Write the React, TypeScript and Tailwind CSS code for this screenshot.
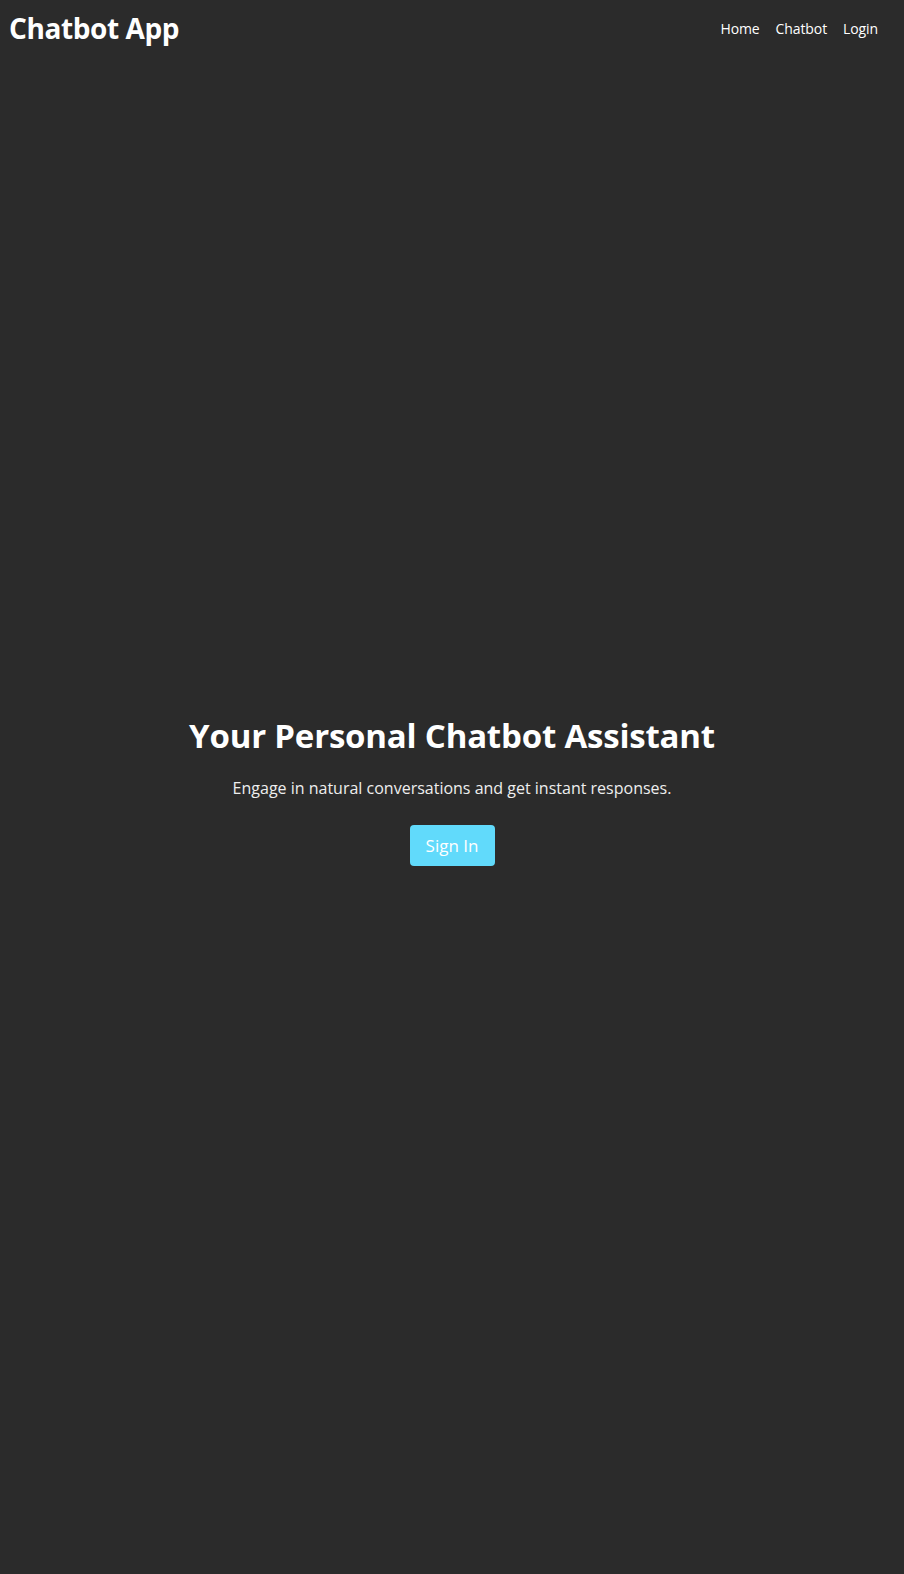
// App.tsx
const navLinks = ["Home", "Chatbot", "Login"];

const App = () => {
  return (
    <div className="flex min-h-screen flex-col bg-[#2b2b2b] text-white font-['Open_Sans',sans-serif]">
      {/* --- Barre du haut --- */}
      <header className="flex h-[56px] items-center justify-between pl-[9px] pr-[26px]">
        <h1 className="text-[28px] font-bold tracking-[-0.4px]">Chatbot App</h1>
        <nav className="flex items-center gap-[16px] text-[14px] tracking-[-0.1px]">
          {navLinks.map(link => (
            <a key={link} href="#" className="text-white">
              {link}
            </a>
          ))}
        </nav>
      </header>

      {/* --- Hero centré --- */}
      <main className="flex flex-1 flex-col items-center justify-center pb-[53px] text-center">
        <h2 className="text-[33px] font-bold tracking-[-0.2px]">Your Personal Chatbot Assistant</h2>
        <p className="mt-[16px] text-[16px] text-[#eeeeee]">
          Engage in natural conversations and get instant responses.
        </p>
        <button className="mt-[25px] h-[41px] w-[85px] rounded-[4px] bg-[#61dafb] text-[17px] text-white">
          Sign In
        </button>
      </main>
    </div>
  );
};

export default App;
